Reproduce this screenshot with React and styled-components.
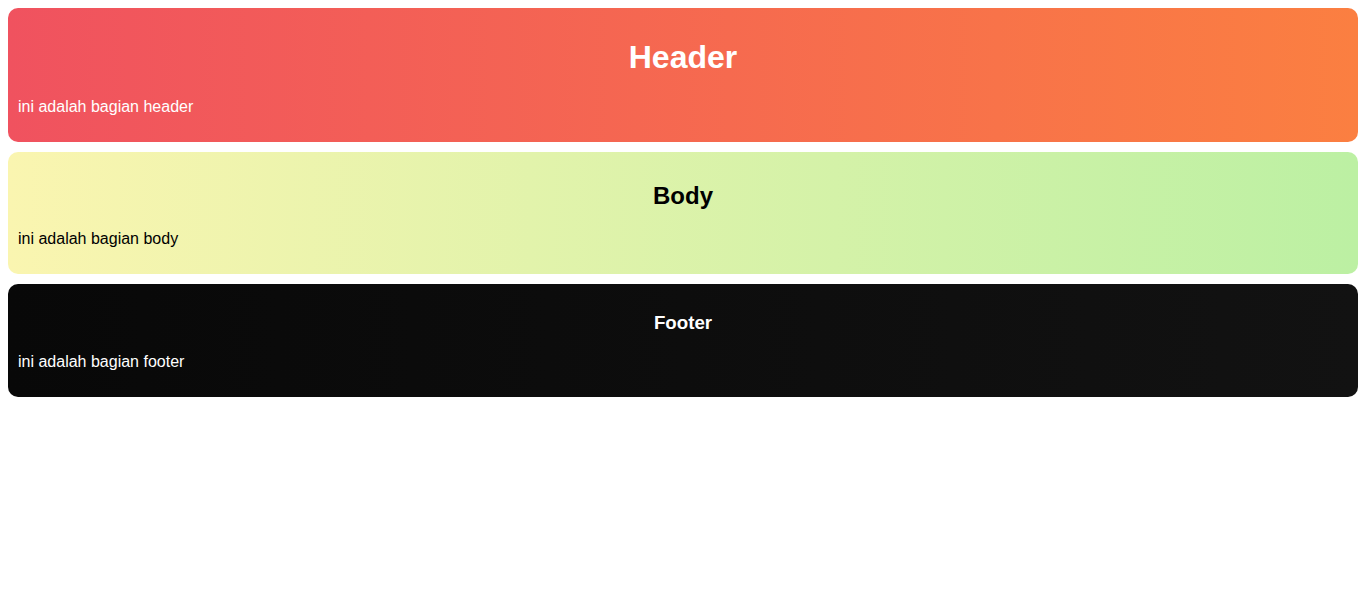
import React from 'react';
import styled, {createGlobalStyle} from 'styled-components';

const GlobalStyle = createGlobalStyle`
    body {
        margin: 8px;
        font-family: "Liberation Sans", Arial, sans-serif;
        background: #fff;
    }
`;

const Section = styled.div`
    padding: 10px;
    margin-bottom: 10px;
    border-radius: 10px;
    color: ${props => props.dark ? '#000' : '#fff'};
    background: ${props => props.bg};
`;

const Title = styled.div`
    text-align: center;
    font-weight: bold;
    font-size: ${props => props.size}px;
    margin: ${props => props.gap}px 0;
`;

const Text = styled.p`
    margin: 16px 0;
    font-size: 16px;
`;

export default function App() {
    return (
        <>
            <GlobalStyle />
            <Section bg="linear-gradient(to right, #f0525f, #fb7f41)">
                <Title as="h1" size={32} gap={21.44}>Header</Title>
                <Text>ini adalah bagian header</Text>
            </Section>
            <Section dark bg="linear-gradient(to right, #faf5b0, #bcf0a3)">
                <Title as="h2" size={24} gap={19.92}>Body</Title>
                <Text>ini adalah bagian body</Text>
            </Section>
            <Section bg="linear-gradient(to right, #080808, #121212)">
                <Title as="h3" size={18.72} gap={18.72}>Footer</Title>
                <Text>ini adalah bagian footer</Text>
            </Section>
        </>
    );
}
